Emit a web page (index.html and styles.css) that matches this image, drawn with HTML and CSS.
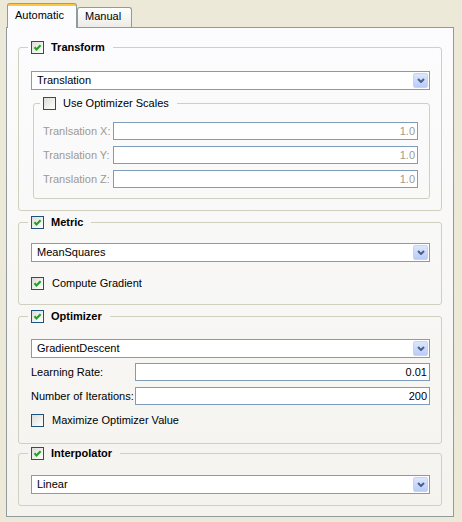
FILE: index.html
```html
<!DOCTYPE html>
<html>
<head>
<meta charset="utf-8">
<title>Registration</title>
<link rel="stylesheet" href="styles.css">
</head>
<body>
<div class="dialog">
  <div class="tabs">
    <div class="tab tab-active">Automatic</div>
    <div class="tab">Manual</div>
  </div>
  <div class="panel">
    <fieldset class="group g-transform">
      <legend class="legend"><span class="legend-in"><span class="cb"><svg width="11" height="11" viewBox="1 1 11 11"><path d="M3.5 6.3L5.5 8.4L9.6 4.3" fill="none" stroke="#21a121" stroke-width="2.1"/></svg></span><span class="legend-text">Transform</span></span></legend>
      <div class="combo"><span class="combo-text">Translation</span><span class="combo-btn"><svg width="8" height="5" viewBox="0 0 8 5"><path d="M1 1L4 4L7 1" fill="none" stroke="#4d6185" stroke-width="2"/></svg></span></div>
      <fieldset class="group inner">
        <legend class="legend"><span class="legend-in"><span class="cb"></span><span>Use Optimizer Scales</span></span></legend>
        <div class="row is-disabled"><span class="row-label">Tranlsation X:</span><span class="field">1.0</span></div>
        <div class="row is-disabled"><span class="row-label">Translation Y:</span><span class="field">1.0</span></div>
        <div class="row is-disabled"><span class="row-label">Translation Z:</span><span class="field">1.0</span></div>
      </fieldset>
    </fieldset>

    <fieldset class="group g-metric">
      <legend class="legend"><span class="legend-in"><span class="cb"><svg width="11" height="11" viewBox="1 1 11 11"><path d="M3.5 6.3L5.5 8.4L9.6 4.3" fill="none" stroke="#21a121" stroke-width="2.1"/></svg></span><span class="legend-text">Metric</span></span></legend>
      <div class="combo"><span class="combo-text">MeanSquares</span><span class="combo-btn"><svg width="8" height="5" viewBox="0 0 8 5"><path d="M1 1L4 4L7 1" fill="none" stroke="#4d6185" stroke-width="2"/></svg></span></div>
      <div class="check-row"><span class="cb"><svg width="11" height="11" viewBox="1 1 11 11"><path d="M3.5 6.3L5.5 8.4L9.6 4.3" fill="none" stroke="#21a121" stroke-width="2.1"/></svg></span><span>Compute Gradient</span></div>
    </fieldset>

    <fieldset class="group g-opt">
      <legend class="legend"><span class="legend-in"><span class="cb"><svg width="11" height="11" viewBox="1 1 11 11"><path d="M3.5 6.3L5.5 8.4L9.6 4.3" fill="none" stroke="#21a121" stroke-width="2.1"/></svg></span><span class="legend-text">Optimizer</span></span></legend>
      <div class="combo"><span class="combo-text">GradientDescent</span><span class="combo-btn"><svg width="8" height="5" viewBox="0 0 8 5"><path d="M1 1L4 4L7 1" fill="none" stroke="#4d6185" stroke-width="2"/></svg></span></div>
      <div class="row row-opt row-first"><span class="row-label">Learning Rate:</span><span class="field">0.01</span></div>
      <div class="row row-opt"><span class="row-label">Number of Iterations:</span><span class="field">200</span></div>
      <div class="check-row"><span class="cb"></span><span>Maximize Optimizer Value</span></div>
    </fieldset>

    <fieldset class="group g-interp">
      <legend class="legend"><span class="legend-in"><span class="cb"><svg width="11" height="11" viewBox="1 1 11 11"><path d="M3.5 6.3L5.5 8.4L9.6 4.3" fill="none" stroke="#21a121" stroke-width="2.1"/></svg></span><span class="legend-text">Interpolator</span></span></legend>
      <div class="combo"><span class="combo-text">Linear</span><span class="combo-btn"><svg width="8" height="5" viewBox="0 0 8 5"><path d="M1 1L4 4L7 1" fill="none" stroke="#4d6185" stroke-width="2"/></svg></span></div>
    </fieldset>
  </div>
</div>
</body>
</html>
```

FILE: styles.css
```css
* { box-sizing: border-box; }
html, body { margin: 0; }
body {
  background: #ece9d8;
  font-family: "Liberation Sans", Arial, sans-serif;
  font-size: 11px;
  color: #000;
  width: 462px;
  height: 522px;
  overflow: hidden;
}
.dialog { padding: 3px 0 0 6px; }

/* tabs */
.tabs {
  display: flex;
  align-items: flex-end;
  height: 24px;
  padding-left: 1px;
}
.tab {
  width: 55px;
  height: 20px;
  padding: 2px 0 0 7px;
  border: 1px solid #919b9c;
  border-bottom: 0;
  border-radius: 3px 3px 0 0;
  background: linear-gradient(#ffffff, #ecebe6);
  line-height: 13px;
}
.tab-active {
  position: relative;
  z-index: 1;
  width: 70px;
  height: 25px;
  margin-bottom: -1px;
  padding: 5px 0 0 7px;
  border-top: 1px solid #e68b2c;
  background: linear-gradient(#ffc83c 0, #ffc83c 2px, #fcfcfe 2px);
}

/* panel */
.panel {
  width: 448px;
  height: 490px;
  border: 1px solid #919b9c;
  background: linear-gradient(#fcfcfe, #f4f3ee);
  padding: 13px 11px 10px 11px;
}

/* group boxes */
.group {
  margin: 0;
  min-width: 0;
  border: 1px solid #d0d0bf;
  border-radius: 3px;
  padding: 0 11px 0 12px;
}
.legend {
  padding: 0 8px 0 3px;
  margin-left: -3px;
  height: 13px;
  line-height: 13px;
}
.legend-in {
  display: flex;
  align-items: center;
  gap: 7px;
  height: 13px;
}
.legend-text { font-weight: bold; }

.g-transform { padding-top: 17px; padding-bottom: 11px; }
.g-metric { margin-top: 5px; padding-top: 14px; padding-bottom: 14px; }
.g-opt { margin-top: 5px; padding-top: 16px; padding-bottom: 16px; }
.g-interp { margin-top: 3px; padding-top: 15px; padding-bottom: 11px; }

.inner {
  margin: 7px 0 0 2px;
  padding: 12px 11px 10px 9px;
}

/* checkbox */
.cb {
  flex: none;
  display: flex;
  width: 13px;
  height: 13px;
  border: 1px solid #1c5180;
  background: linear-gradient(135deg, #dcdcd7, #ffffff);
}
.cb svg { display: block; }

.check-row {
  display: flex;
  align-items: center;
  gap: 8px;
  height: 13px;
  line-height: 13px;
}
.g-metric .check-row { margin-top: 15px; }
.g-opt .check-row { margin-top: 9px; }

/* combo box */
.combo {
  display: flex;
  align-items: center;
  height: 19px;
  border: 1px solid #7f9db9;
  background: #fff;
  padding-left: 5px;
  line-height: 13px;
}
.combo-text { flex: 1; }
.combo-btn {
  flex: none;
  display: flex;
  align-items: center;
  justify-content: center;
  width: 15px;
  height: 15px;
  margin-right: 1px;
  border: 1px solid #c3d3fd;
  border-radius: 2px;
  background: linear-gradient(#dce7fe, #b9cbf8);
}
.combo-btn svg { display: block; }

/* label + field rows */
.row {
  display: flex;
  align-items: center;
  height: 18px;
}
.row + .row { margin-top: 6px; }
.row-label { width: 70px; flex: none; }
.row-opt .row-label { width: 104px; }
.row-first { margin-top: 5px; }
.field {
  flex: 1;
  height: 18px;
  border: 1px solid #7f9db9;
  background: #fff;
  text-align: right;
  padding-right: 2px;
  line-height: 16px;
}
.is-disabled .row-label,
.is-disabled .field { color: #9d9a8e; }
```
